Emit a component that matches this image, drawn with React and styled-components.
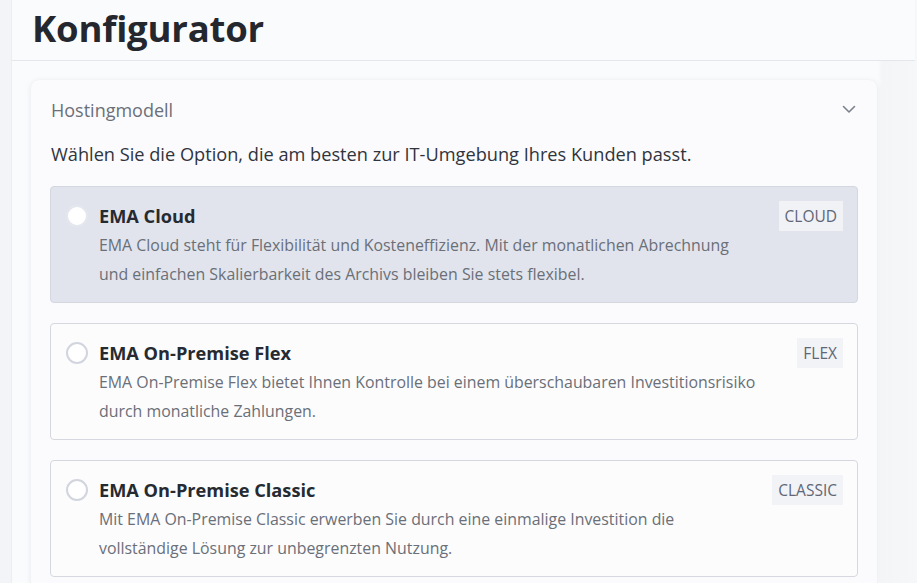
import React from "react";
import styled, { createGlobalStyle } from "styled-components";

const Global = createGlobalStyle`
  html, body { margin: 0; padding: 0; background: #f6f7f9; }
  body { font-family: "Open Sans", "Noto Sans", sans-serif; -webkit-font-smoothing: antialiased; }
  * { box-sizing: border-box; }
`;

const Shell = styled.div`
  display: flex;
  width: 917px;
  height: 583px;
  overflow: hidden;
  background: #f6f7f9;
`;

const SideRail = styled.div`
  width: 12px;
  flex: none;
  background: #f3f4f7;
  border-right: 1px solid #ebedf1;
`;

const Main = styled.main`
  flex: 1;
  display: flex;
  flex-direction: column;
  background: linear-gradient(90deg, #fafbfc 0, #fafbfc 866px, #f4f5f7 870px, #f6f7f9 100%);
`;

const Header = styled.header`
  height: 61px;
  flex: none;
  padding: 0 0 0 20px;
  display: flex;
  align-items: center;
  border-bottom: 1px solid #e3e6eb;
  margin-right: 2px;
  background: #fafbfc;
`;

const Title = styled.h1`
  margin: 0;
  font-size: 36.5px;
  font-weight: 700;
  color: #25272e;
  letter-spacing: -0.2px;
  line-height: 1;
  position: relative;
  top: -2px;
`;

const Content = styled.div`
  padding: 19px 0 0 19px;
`;

const Card = styled.section`
  width: 846px;
  background: #fbfbfd;
  border-radius: 8px;
  box-shadow: 0 1px 6px rgba(20, 30, 60, 0.08), 0 0 1px rgba(20, 30, 60, 0.06);
  padding: 0 19px 20px;
`;

const CardHeader = styled.div`
  height: 59px;
  display: flex;
  align-items: center;
  justify-content: space-between;
  padding: 0 2px 0 1px;
`;

const CardLabel = styled.span`
  font-size: 18px;
  color: #6b7079;
`;

const Intro = styled.p`
  margin: 0 0 17px;
  padding-left: 1px;
  font-size: 18.2px;
  line-height: 30px;
  color: #30343c;
`;

const Options = styled.div`
  display: flex;
  flex-direction: column;
  gap: 20px;
`;

const Option = styled.label`
  display: grid;
  grid-template-columns: 22px 1fr auto;
  column-gap: 11px;
  align-items: start;
  padding: 14px 14px 13px 15px;
  border: 1px solid ${(p) => (p.$active ? "#d3d7e0" : "#d5d8de")};
  border-radius: 4px;
  background: ${(p) => (p.$active ? "#e1e4ec" : "#fcfcfd")};
  cursor: pointer;
`;

const Radio = styled.span`
  width: 22px;
  height: 22px;
  margin-top: 4px;
  border-radius: 50%;
  border: 2px solid ${(p) => (p.$active ? "#e4e7ee" : "#d2d5de")};
  background: #ffffff;
`;

const Body = styled.div`
  display: flex;
  flex-direction: column;
  max-width: 658px;
`;

const OptionTitle = styled.span`
  font-size: 18.2px;
  font-weight: 700;
  color: #262a31;
  line-height: 30px;
`;

const OptionText = styled.span`
  font-size: 15.9px;
  line-height: 29px;
  color: #6a6f78;
`;

const Badge = styled.span`
  height: 30px;
  padding: 0 6px;
  display: flex;
  align-items: center;
  font-size: 15.5px;
  color: #5f6677;
  background: ${(p) => (p.$active ? "#f0f2f6" : "#f2f3f6")};
`;

const Chevron = () => (
  <svg width="14" height="9" viewBox="0 0 14 9" fill="none">
    <path d="M1.5 1.5 L7 7 L12.5 1.5" stroke="#7a808c" strokeWidth="1.6" strokeLinecap="round" strokeLinejoin="round" />
  </svg>
);

const options = [
  {
    id: "cloud",
    title: "EMA Cloud",
    badge: "CLOUD",
    text: "EMA Cloud steht für Flexibilität und Kosteneffizienz. Mit der monatlichen Abrechnung und einfachen Skalierbarkeit des Archivs bleiben Sie stets flexibel.",
    active: true,
  },
  {
    id: "flex",
    title: "EMA On-Premise Flex",
    badge: "FLEX",
    text: "EMA On-Premise Flex bietet Ihnen Kontrolle bei einem überschaubaren Investitionsrisiko durch monatliche Zahlungen.",
  },
  {
    id: "classic",
    title: "EMA On-Premise Classic",
    badge: "CLASSIC",
    text: "Mit EMA On-Premise Classic erwerben Sie durch eine einmalige Investition die vollständige Lösung zur unbegrenzten Nutzung.",
  },
];

export default function App() {
  return (
    <>
      <Global />
      <Shell>
        <SideRail />
        <Main>
          <Header>
            <Title>Konfigurator</Title>
          </Header>
          <Content>
            <Card>
              <CardHeader>
                <CardLabel>Hostingmodell</CardLabel>
                <Chevron />
              </CardHeader>
              <Intro>Wählen Sie die Option, die am besten zur IT-Umgebung Ihres Kunden passt.</Intro>
              <Options>
                {options.map((o) => (
                  <Option key={o.id} $active={o.active}>
                    <Radio $active={o.active} />
                    <Body>
                      <OptionTitle>{o.title}</OptionTitle>
                      <OptionText>{o.text}</OptionText>
                    </Body>
                    <Badge $active={o.active}>{o.badge}</Badge>
                  </Option>
                ))}
              </Options>
            </Card>
          </Content>
        </Main>
      </Shell>
    </>
  );
}
